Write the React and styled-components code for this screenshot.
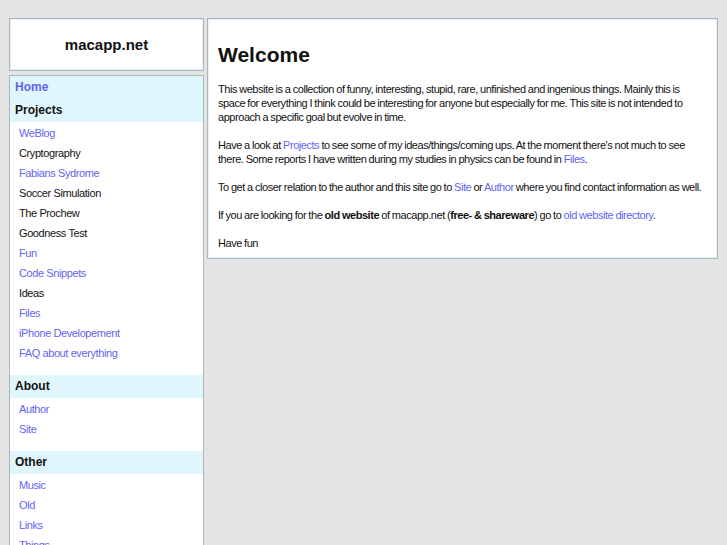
import React from "react";
import styled, { createGlobalStyle } from "styled-components";

const Global = createGlobalStyle`
  html, body { margin: 0; padding: 0; background: #e4e4e4; }
  body { font-family: "Liberation Sans", Arial, Helvetica, sans-serif; color: #111; }
`;

const Page = styled.div`
  display: grid;
  grid-template-columns: 195px 511px;
  column-gap: 3px;
  align-items: start;
  padding: 18px 9px 0 9px;
`;

const Column = styled.div`
  display: flex;
  flex-direction: column;
  gap: 4px;
`;

const Box = styled.div`
  box-sizing: border-box;
  background: #fff;
  border: 1px solid #a9b6bd;
  box-shadow: inset 0 0 0 1px #e6f2f5;
`;

const TitleBox = styled(Box)`
  height: 53px;
  display: flex;
  align-items: center;
  justify-content: center;
`;

const Title = styled.div`
  font-size: 15px;
  font-weight: bold;
  color: #111;
`;

const Nav = styled(Box)`
  box-shadow: none;
  padding-bottom: 20px;
`;

const NavHeader = styled.div`
  background: #dff6fc;
  height: 23px;
  line-height: 23px;
  padding-left: 5px;
  font-size: 12px;
  font-weight: bold;
  color: ${p => (p.$link ? "#6363f5" : "#111")};
`;

const NavList = styled.ul`
  list-style: none;
  margin: 0;
  padding: 1px 0 12px 0;
`;

const NavItem = styled.li`
  height: 20px;
  line-height: 20px;
  padding-left: 9px;
  font-size: 11px;
  letter-spacing: -0.4px;
  color: ${p => (p.$link ? "#6363f5" : "#111")};
`;

const Main = styled(Box)`
  padding: 22px 9px 8px 10px;
`;

const Heading = styled.h1`
  font-size: 21px;
  font-weight: bold;
  margin: 0 0 13px 0;
  line-height: 28px;
  color: #111;
`;

const Para = styled.p`
  font-size: 11px;
  line-height: 14px;
  letter-spacing: -0.45px;
  word-spacing: -0.4px;
  margin: 0 0 14px 0;
  &:last-child { margin-bottom: 0; }
`;

const A = styled.span`
  color: #6363f5;
`;

const projects = [
  ["WeBlog", true],
  ["Cryptography", false],
  ["Fabians Sydrome", true],
  ["Soccer Simulation", false],
  ["The Prochew", false],
  ["Goodness Test", false],
  ["Fun", true],
  ["Code Snippets", true],
  ["Ideas", false],
  ["Files", true],
  ["iPhone Developement", true],
  ["FAQ about everything", true],
];

export default function App() {
  return (
    <>
      <Global />
      <Page>
        <Column>
          <TitleBox>
            <Title>macapp.net</Title>
          </TitleBox>
          <Nav>
            <NavHeader $link>Home</NavHeader>
            <NavHeader>Projects</NavHeader>
            <NavList>
              {projects.map(([t, l]) => (
                <NavItem key={t} $link={l}>{t}</NavItem>
              ))}
            </NavList>
            <NavHeader>About</NavHeader>
            <NavList>
              <NavItem $link>Author</NavItem>
              <NavItem $link>Site</NavItem>
            </NavList>
            <NavHeader>Other</NavHeader>
            <NavList>
              <NavItem $link>Music</NavItem>
              <NavItem $link>Old</NavItem>
              <NavItem $link>Links</NavItem>
              <NavItem $link>Things</NavItem>
            </NavList>
          </Nav>
        </Column>
        <Main>
          <Heading>Welcome</Heading>
          <Para>
            This website is a collection of funny, interesting, stupid, rare, unfinished and ingenious things. Mainly this is space for everything I think could be interesting for anyone but especially for me. This site is not intended to approach a specific goal but evolve in time.
          </Para>
          <Para>
            Have a look at <A>Projects</A> to see some of my ideas/things/coming ups. At the moment there's not much to see there. Some reports I have written during my studies in physics can be found in <A>Files</A>.
          </Para>
          <Para>
            To get a closer relation to the author and this site go to <A>Site</A> or <A>Author</A> where you find contact information as well.
          </Para>
          <Para>
            If you are looking for the <b>old website</b> of macapp.net (<b>free- &amp; shareware</b>) go to <A>old website directory</A>.
          </Para>
          <Para>Have fun</Para>
        </Main>
      </Page>
    </>
  );
}
